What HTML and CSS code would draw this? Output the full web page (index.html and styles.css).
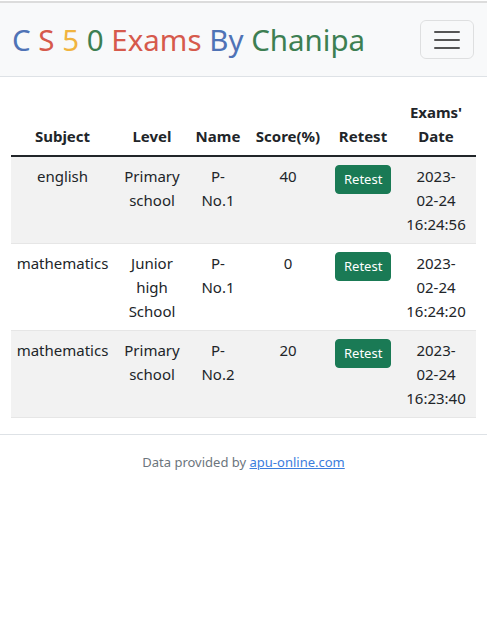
FILE: index.html
```html
<!DOCTYPE html>
<html lang="en">
<head>
<meta charset="utf-8">
<title>CS50 Exams By Chanipa</title>
<link rel="stylesheet" href="styles.css">
</head>
<body>
<nav class="navbar">
  <a class="brand" href="#">
    <span class="c-blue">C</span> <span class="c-red">S</span> <span class="c-yellow">5</span> <span class="c-green">0</span> <span class="c-red">Exams</span> <span class="c-blue">By</span> <span class="c-green">Chanipa</span>
  </a>
  <button class="toggler" type="button" aria-label="Toggle navigation">
    <svg width="30" height="30" viewBox="0 0 30 30"><path d="M3 7h24M3 15h24M3 23h24" stroke="#555" stroke-width="2" stroke-linecap="round"/></svg>
  </button>
</nav>
<main class="container">
  <table class="table">
    <colgroup>
      <col class="col-subject">
      <col class="col-level">
      <col class="col-name">
      <col class="col-score">
      <col class="col-retest">
      <col class="col-date">
    </colgroup>
    <thead>
      <tr>
        <th>Subject</th>
        <th>Level</th>
        <th>Name</th>
        <th>Score(%)</th>
        <th>Retest</th>
        <th>Exams'<br>Date</th>
      </tr>
    </thead>
    <tbody>
      <tr class="striped">
        <td>english</td>
        <td>Primary<br>school</td>
        <td>P-<br>No.1</td>
        <td>40</td>
        <td><button class="btn">Retest</button></td>
        <td>2023-<br>02-24<br>16:24:56</td>
      </tr>
      <tr>
        <td>mathematics</td>
        <td>Junior<br>high<br>School</td>
        <td>P-<br>No.1</td>
        <td>0</td>
        <td><button class="btn">Retest</button></td>
        <td>2023-<br>02-24<br>16:24:20</td>
      </tr>
      <tr class="striped">
        <td>mathematics</td>
        <td>Primary<br>school</td>
        <td>P-<br>No.2</td>
        <td>20</td>
        <td><button class="btn">Retest</button></td>
        <td>2023-<br>02-24<br>16:23:40</td>
      </tr>
    </tbody>
  </table>
</main>
<footer class="footer">
  Data provided by <a href="#">apu-online.com</a>
</footer>
</body>
</html>
```
FILE: styles.css
```css
* { box-sizing: border-box; }
html, body { margin: 0; padding: 0; background: #fff; }
body {
  padding-top: 1px;
  font-family: "Noto Sans", "Open Sans", sans-serif;
  font-size: 15px;
  line-height: 24px;
  color: #212529;
}
.navbar {
  display: flex;
  align-items: center;
  justify-content: space-between;
  height: 76px;
  padding: 0 12px;
  background: #f8f9fa;
  border-top: 2px solid #dcdcdc;
  border-bottom: 1px solid #dee2e6;
}
.brand {
  text-decoration: none;
  font-size: 29.5px;
  line-height: 36px;
  white-space: nowrap;
}
.c-blue { color: #4f73b6; }
.c-red { color: #d65a4c; }
.c-yellow { color: #f1b43f; }
.c-green { color: #3d7f52; }
.toggler {
  width: 54px;
  height: 39px;
  margin-right: 1px;
  display: flex;
  align-items: center;
  justify-content: center;
  background: transparent;
  border: 1px solid rgba(0,0,0,0.1);
  border-radius: 6px;
  padding: 0;
}
.toggler svg { display: block; }
.container {
  padding: 16px 11px 0;
}
.table {
  width: 100%;
  table-layout: fixed;
  border-collapse: collapse;
  margin-bottom: 16px;
}
.col-subject { width: 103px; }
.col-level { width: 76px; }
.col-name { width: 56px; }
.col-score { width: 84px; }
.col-retest { width: 66px; }
.col-date { width: 80px; }
.table th, .table td {
  text-align: center;
  padding: 7px 5px;
}
.table th {
  vertical-align: bottom;
  font-weight: 700;
  border-bottom: 2px solid #212529;
}
.table td {
  vertical-align: top;
  border-bottom: 1px solid #e6e6e6;
}
.striped td { background: #f2f2f2; }
.btn {
  font-family: inherit;
  font-size: 13px;
  line-height: 21px;
  padding: 3px 8px;
  color: #fff;
  background: #1a7a55;
  border: 1px solid #1a7a55;
  border-radius: 4px;
  margin-top: 1px;
}
.footer {
  border-top: 1px solid #dee2e6;
  padding: 15px 0;
  text-align: center;
  font-size: 13px;
  color: #6c757d;
}
.footer a { color: #3b7ddd; }
```
